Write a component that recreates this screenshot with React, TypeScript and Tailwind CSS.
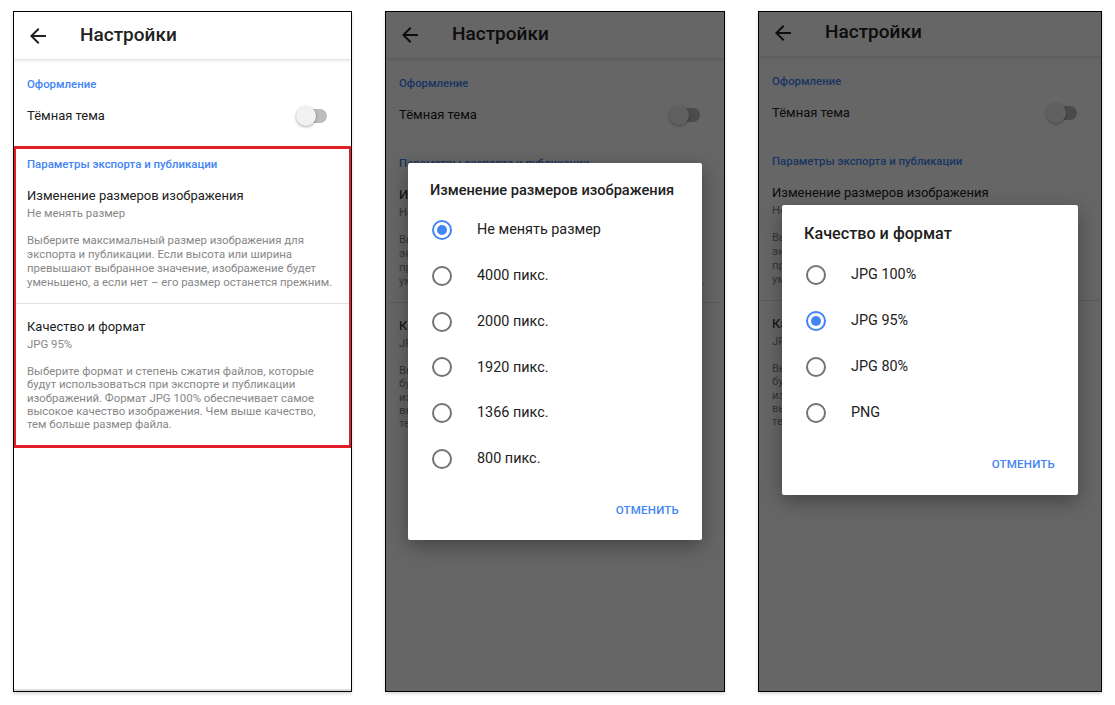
import React from "react";

const BLUE = "#4285f4";

function ArrowBack() {
  return (
    <svg width="24" height="24" viewBox="0 0 24 24" className="shrink-0">
      <path d="M20 11H7.83l5.59-5.59L12 4l-8 8 8 8 1.41-1.41L7.83 13H20v-2z" fill="#212121" />
    </svg>
  );
}

function Switch() {
  return (
    <span className="relative flex h-[20px] w-[31px] items-center justify-end">
      <span className="h-[14px] w-[28px] rounded-full bg-[#bcbcbc]" />
      <span className="absolute left-0 top-0 h-[20px] w-[20px] rounded-full bg-[#f1f1f1] shadow-[0_1px_3px_rgba(0,0,0,0.35)]" />
    </span>
  );
}

function Radio({ on }: { on?: boolean }) {
  return (
    <span
      className={`flex h-[20px] w-[20px] shrink-0 items-center justify-center rounded-full border-2 ${
        on ? "border-[#4285f4]" : "border-[#737373]"
      }`}
    >
      {on && <span className="h-[10px] w-[10px] rounded-full bg-[#4285f4]" />}
    </span>
  );
}

function Settings({ highlight, shift }: { highlight?: boolean; shift?: string }) {
  return (
    <div className={`flex flex-col ${shift ?? ""}`}>
      {/* toolbar */}
      <header className="relative z-10 flex h-[48px] items-center border-b border-[#e6e6e6] bg-white pl-[12px] shadow-[0_1px_3px_rgba(0,0,0,0.1)]">
        <ArrowBack />
        <h1 className="ml-[30px] text-[19px] font-medium text-[#212121]">Настройки</h1>
      </header>

      {/* appearance */}
      <div className="pl-[13px] pt-[16px] text-[11.4px] font-medium leading-4 text-[#4285f4]">Оформление</div>
      <div className="flex h-[48px] items-center justify-between pl-[13px] pr-[24px]">
        <span className="text-[13px] text-[#212121]">Тёмная тема</span>
        <Switch />
      </div>

      {/* export */}
      <section
        className={`-mx-px mt-[6px] border-[3px] ${highlight ? "border-[#e41e26]" : "border-transparent"}`}
      >
        <div className="pl-[11px] pt-[7px] text-[11.4px] font-medium leading-4 text-[#4285f4]">
          Параметры экспорта и публикации
        </div>

        <div className="pb-[14px] pl-[11px] pt-[15px]">
          <div className="text-[13px] leading-[18px] text-[#212121]">Изменение размеров изображения</div>
          <div className="text-[11.4px] leading-4 text-[#878787]">Не менять размер</div>
          <p className="mt-[12px] whitespace-nowrap text-[11.4px] leading-[14px] text-[#878787]">
            Выберите максимальный размер изображения для
            <br />
            экспорта и публикации. Если высота или ширина
            <br />
            превышают выбранное значение, изображение будет
            <br />
            уменьшено, а если нет – его размер останется прежним.
          </p>
        </div>

        <div className="h-px bg-[#e0e0e0]" />

        <div className="pb-[14px] pl-[11px] pt-[14px]">
          <div className="text-[13px] leading-[18px] text-[#212121]">Качество и формат</div>
          <div className="text-[11.4px] leading-4 text-[#878787]">JPG 95%</div>
          <p className="mt-[13px] whitespace-nowrap text-[11.4px] leading-[13.3px] text-[#878787]">
            Выберите формат и степень сжатия файлов, которые
            <br />
            будут использоваться при экспорте и публикации
            <br />
            изображений. Формат JPG 100% обеспечивает самое
            <br />
            высокое качество изображения. Чем выше качество,
            <br />
            тем больше размер файла.
          </p>
        </div>
      </section>
    </div>
  );
}

function Dialog({
  title,
  options,
  selected,
  wide,
}: {
  title: string;
  options: string[];
  selected: number;
  wide?: boolean;
}) {
  return (
    <div
      className={`rounded-[2px] bg-white shadow-[0_6px_20px_rgba(0,0,0,0.35)] ${
        wide ? "w-[296px] -translate-y-[2px]" : "w-[294px]"
      }`}
    >
      <div
        className={`pl-[22px] font-medium leading-5 text-[#212121] ${
          wide ? "h-[47px] pt-[19px] text-[16.2px]" : "h-[44px] pt-[17px] text-[14.6px]"
        }`}
      >
        {title}
      </div>
      {options.map((o, i) => (
        <div key={o} className={`flex items-center pl-[24px] ${wide ? "h-[46px]" : "h-[45.8px]"}`}>
          <Radio on={i === selected} />
          <span className="ml-[25px] text-[14.4px] text-[#212121]">{o}</span>
        </div>
      ))}
      <div className={`flex items-center justify-end pr-[23px] ${wide ? "h-[59px]" : "h-[58px]"}`}>
        <span style={{ color: BLUE }} className="text-[11.5px] font-medium tracking-[0.2px]">
          ОТМЕНИТЬ
        </span>
      </div>
    </div>
  );
}

function Phone({
  width,
  children,
  bottomLine,
}: {
  width: string;
  children: React.ReactNode;
  bottomLine?: boolean;
}) {
  return (
    <div
      className={`relative h-[681px] shrink-0 overflow-hidden border border-black bg-white ${width} ${
        bottomLine
          ? "shadow-[inset_0_-2px_0_#dcdcdc,0_2px_3px_rgba(0,0,0,0.15)]"
          : "shadow-[0_2px_3px_rgba(0,0,0,0.15)]"
      }`}
    >
      {children}
    </div>
  );
}

export default function App() {
  return (
    <main className="flex min-h-screen gap-[33px] bg-white pl-[13px] pt-[11px] [font-family:Roboto,sans-serif]">
      {/* 1: settings with highlight */}
      <Phone width="w-[339px]" bottomLine>
        <Settings highlight />
      </Phone>

      {/* 2: image size dialog */}
      <Phone width="w-[340px]">
        <Settings shift="-mt-px" />
        <div className="absolute inset-0 z-20 flex items-center justify-center bg-black/60">
          <Dialog
            title="Изменение размеров изображения"
            options={["Не менять размер", "4000 пикс.", "2000 пикс.", "1920 пикс.", "1366 пикс.", "800 пикс."]}
            selected={0}
          />
        </div>
      </Phone>

      {/* 3: quality dialog */}
      <Phone width="w-[344px]">
        <Settings shift="-mt-[3px]" />
        <div className="absolute inset-0 z-20 flex items-center justify-center bg-black/60">
          <Dialog title="Качество и формат" options={["JPG 100%", "JPG 95%", "JPG 80%", "PNG"]} selected={1} wide />
        </div>
      </Phone>
    </main>
  );
}
